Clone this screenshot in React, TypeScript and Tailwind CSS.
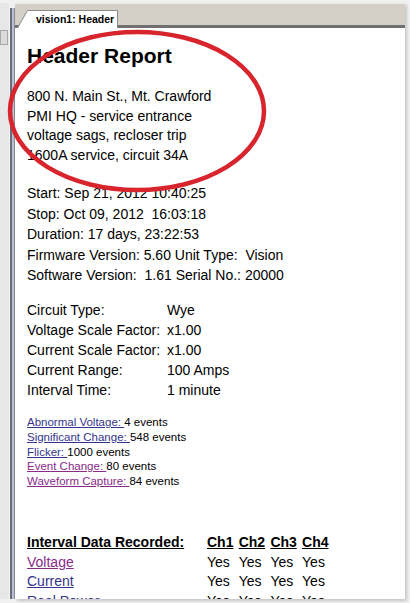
import React from 'react';

const events = [
  { label: 'Abnormal Voltage: ', count: '4 events', visited: false },
  { label: 'Significant Change: ', count: '548 events', visited: false },
  { label: 'Flicker: ', count: '1000 events', visited: false },
  { label: 'Event Change: ', count: '80 events', visited: true },
  { label: 'Waveform Capture: ', count: '84 events', visited: true },
];

const settings = [
  ['Circuit Type:', 'Wye'],
  ['Voltage Scale Factor:', 'x1.00'],
  ['Current Scale Factor:', 'x1.00'],
  ['Current Range:', '100 Amps'],
  ['Interval Time:', '1 minute'],
];

const intervals = [
  { name: 'Voltage', visited: true },
  { name: 'Current', visited: false },
  { name: 'Real Power', visited: false },
];

export default function App() {
  return (
    <div className="relative w-[410px] h-[603px] overflow-hidden bg-[#f1f1f1] font-['Liberation_Sans',Arial,sans-serif] text-black">
      <div className="flex h-full pt-[3px] pr-[5px] pb-[4px]">
        {/* left dock strip */}
        <aside className="w-[9px] shrink-0 bg-[#e7e7e7] pt-[27px]">
          <div className="h-[15px] w-[8px] border border-[#a8a8a8] bg-[#dadada]" />
        </aside>
        <div className="flex w-[6px] shrink-0 mt-[5px]">
          <div className="w-[1px] bg-[#f4f4f4]" />
          <div className="w-[2px] bg-[#6c6c78]" />
          <div className="w-[2px] bg-[#b9bdd6]" />
          <div className="w-[1px] bg-[#8a8a8a]" />
        </div>

        <main className="flex flex-1 min-w-0 flex-col bg-white shadow-[2px_2px_3px_rgba(0,0,0,0.18)]">
          {/* tab bar */}
          <div className="flex h-[25px] shrink-0 items-end bg-[#d4d0c8] border-t border-t-[#ebe9e3] border-b-[3px] border-b-[#707070] pl-[2px]">
            <div className="relative -mb-[3px] h-[18px] w-[101px]">
              <svg className="absolute inset-0" width="101" height="18" viewBox="0 0 101 18">
                <path d="M0.5 18 L10.5 0.5 L100.5 0.5 L100.5 18 Z" fill="#ffffff" />
                <path d="M0.5 18 L10.5 0.5 L100.5 0.5 L100.5 18" fill="none" stroke="#8a8a8a" />
              </svg>
              <span className="relative block pl-[19px] text-[10.5px] font-bold leading-[18px]">vision1: Header</span>
            </div>
          </div>

          {/* report */}
          <div className="flex-1 overflow-hidden pl-[12px] pt-[16px]">
            <h1 className="text-[21px] font-bold leading-[24px]">Header Report</h1>

            <div className="mt-[19px] text-[14px] leading-[19.5px]">
              <div>800 N. Main St., Mt. Crawford</div>
              <div>PMI HQ - service entrance</div>
              <div>voltage sags, recloser trip</div>
              <div>1600A service, circuit 34A</div>
            </div>

            <div className="mt-[18px] text-[14px] leading-[20.5px] whitespace-pre">
              <div>Start: Sep 21, 2012 10:40:25</div>
              <div>Stop: Oct 09, 2012  16:03:18</div>
              <div>Duration: 17 days, 23:22:53</div>
              <div>Firmware Version: 5.60 Unit Type:  Vision</div>
              <div>Software Version:  1.61 Serial No.: 20000</div>
            </div>

            <div className="mt-[14.5px] grid grid-cols-[140px_1fr] text-[14px] leading-[20px]">
              {settings.map(([k, v]) => (
                <React.Fragment key={k}>
                  <div>{k}</div>
                  <div>{v}</div>
                </React.Fragment>
              ))}
            </div>

            <div className="mt-[15px] text-[11.5px] leading-[14.75px] whitespace-pre">
              {events.map((e) => (
                <div key={e.label}>
                  <a className={`underline ${e.visited ? 'text-[#8a2a8a]' : 'text-[#34348c]'}`}>{e.label}</a>
                  {e.count}
                </div>
              ))}
            </div>

            <div className="mt-[44.5px] grid grid-cols-[180px_31.7px_31.7px_31.7px_31.7px] text-[14px] leading-[19.5px]">
              <div className="font-bold underline">Interval Data Recorded:</div>
              <div className="font-bold underline">Ch1</div>
              <div className="font-bold underline">Ch2</div>
              <div className="font-bold underline">Ch3</div>
              <div className="font-bold underline">Ch4</div>
              {intervals.map((r) => (
                <React.Fragment key={r.name}>
                  <div>
                    <a className={`underline ${r.visited ? 'text-[#8a2a8a]' : 'text-[#34348c]'}`}>{r.name}</a>
                  </div>
                  <div>Yes</div>
                  <div>Yes</div>
                  <div>Yes</div>
                  <div>Yes</div>
                </React.Fragment>
              ))}
            </div>
          </div>
        </main>
      </div>

      {/* red annotation circle */}
      <svg className="pointer-events-none absolute inset-0" width="410" height="603" viewBox="0 0 410 603">
        <ellipse cx="137" cy="111" rx="127" ry="79" fill="none" stroke="#d8242c" strokeWidth="4.5" />
      </svg>
    </div>
  );
}
